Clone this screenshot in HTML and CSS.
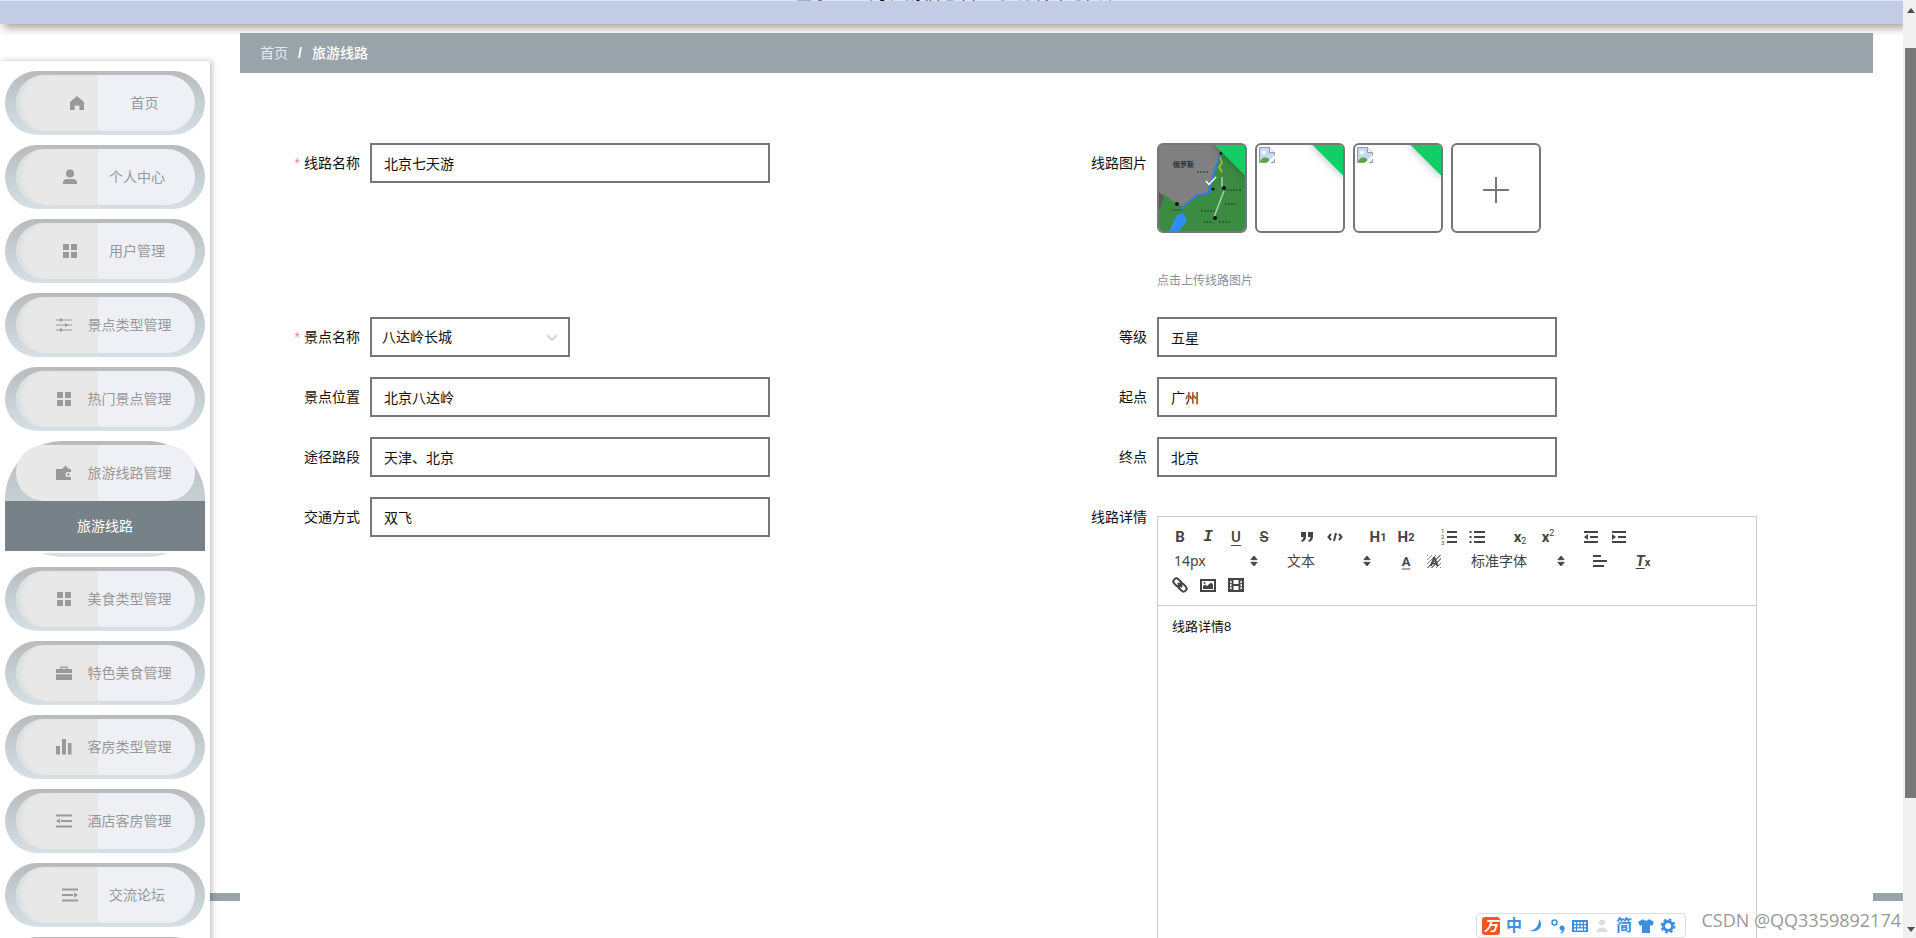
FILE: index.html
```html
<!DOCTYPE html>
<html lang="zh-CN">
<head>
<meta charset="utf-8">
<title>旅游线路</title>
<link rel="stylesheet" href="styles.css">
</head>
<body>
<svg class="defs" aria-hidden="true">
  <symbol id="i-home" viewBox="0 0 16 16"><path d="M8 1 1 7v8h4.600v-4.500h4.800V15H15V7z"/></symbol>
  <symbol id="i-user" viewBox="0 0 16 16"><circle cx="8" cy="4.500" r="4"/><path d="M1 15v-1.500C1 11 3 10 5 10h6c2 0 4 1 4 3.500V15z"/></symbol>
  <symbol id="i-grid" viewBox="0 0 16 16"><path d="M1 1h6v6H1zM9 1h6v6H9zM1 9h6v6H1zM9 9h6v6H9z"/></symbol>
  <symbol id="i-oper" viewBox="0 0 16 16"><path d="M0 2.500h4V1l3 1.500h9v1H7L4 5V3.500H0zM0 7.500h9V6l3 1.500h4v1h-4L9 10V8.500H0zM0 12.500h4V11l3 1.500h9v1H7L4 15v-1.500H0z"/></symbol>
  <symbol id="i-wallet" viewBox="0 0 16 16"><path d="M0 4h6l3.500-3.500L13 4h2v3h-3a2.500 2.500 0 0 0 0 5h3v3H0z"/><circle cx="12.500" cy="9.500" r="1.200"/></symbol>
  <symbol id="i-case" viewBox="0 0 16 16"><path d="M4.500 4V1.500h7V4H16v4H0V4zM6 4h4V2.800H6zM0 9.200h16V15H0z"/></symbol>
  <symbol id="i-bars" viewBox="0 0 16 16"><path d="M0 7h4v8.500H0zM6 0h4v15.500H6zM12 4h3.500v11.500H12z"/></symbol>
  <symbol id="i-fold" viewBox="0 0 16 16"><path d="M0 1.500h16v2H0zM5 7h11v2H5zM0 12.500h16v2H0zM0 8l4-2.500v5z"/></symbol>
  <symbol id="i-unfold" viewBox="0 0 16 16"><path d="M0 1.500h16v2H0zM0 7h11v2H0zM0 12.500h16v2H0zM16 8l-4-2.500v5z"/></symbol>
  <symbol id="i-sort" viewBox="0 0 18 18"><path d="M5.500 7.500 9 3.500l3.500 4zM5.500 10.500 9 14.500l3.500-4z" stroke="currentColor" stroke-width="1" stroke-linejoin="round"/></symbol>
  <symbol id="i-broken" viewBox="0 0 16 16"><path d="M.5.500h10l5 5v10H.5z" fill="#c5d8f5" stroke="#9a9a9a"/><path d="M10.500.500v5h5" fill="#fff" stroke="#9a9a9a"/><circle cx="5" cy="5.500" r="2" fill="#fff"/><path d="M1 15c1-4 4-5.500 8-4l3 4z" fill="#5aa63c"/><path d="m7.500 16 8.500-8v3.500L11.500 16z" fill="#fff"/></symbol>
</svg>

<div class="page">
  <header class="topbar"><h1 class="title">基于Java的旅游信息管理系统设计与实现</h1></header>
  <div class="layout">
    <aside class="sidebar">
      <ul class="menu">
        <li class="item"><a href="#" class="pill short"><svg class="mi"><use href="#i-home"/></svg>首页</a></li>
        <li class="item"><a href="#" class="pill medium"><svg class="mi"><use href="#i-user"/></svg>个人中心</a></li>
        <li class="item"><a href="#" class="pill medium"><svg class="mi"><use href="#i-grid"/></svg>用户管理</a></li>
        <li class="item"><a href="#" class="pill"><svg class="mi"><use href="#i-oper"/></svg>景点类型管理</a></li>
        <li class="item"><a href="#" class="pill"><svg class="mi"><use href="#i-grid"/></svg>热门景点管理</a></li>
        <li class="item open"><a href="#" class="pill"><svg class="mi"><use href="#i-wallet"/></svg>旅游线路管理</a><a href="#" class="sub">旅游线路</a></li>
        <li class="item"><a href="#" class="pill"><svg class="mi"><use href="#i-grid"/></svg>美食类型管理</a></li>
        <li class="item"><a href="#" class="pill"><svg class="mi"><use href="#i-case"/></svg>特色美食管理</a></li>
        <li class="item"><a href="#" class="pill"><svg class="mi"><use href="#i-bars"/></svg>客房类型管理</a></li>
        <li class="item"><a href="#" class="pill"><svg class="mi"><use href="#i-fold"/></svg>酒店客房管理</a></li>
        <li class="item"><a href="#" class="pill medium"><svg class="mi"><use href="#i-unfold"/></svg>交流论坛</a></li>
        <li class="item"><a href="#" class="pill medium"><svg class="mi"><use href="#i-grid"/></svg></a></li>
      </ul>
    </aside>
    <main class="main">
      <div class="content">
        <nav class="crumbs"><a href="#">首页</a><span class="sep">/</span><span class="here">旅游线路</span></nav>
        <form class="form">
          <div class="field"><label for="name" class="label"><span class="req">*</span>线路名称</label><input id="name" class="input" value="北京七天游"></div>
          <div class="field">
            <span class="label">线路图片</span>
            <div class="upload">
              <div class="thumbs">
                <div class="thumb">
                  <svg class="map" viewBox="0 0 86 86" preserveAspectRatio="none">
                    <rect width="86" height="86" fill="#3b8c42"/>
                    <path d="M0 0h64L60 12 54 34 48 48 38 50 24 62 14 56 6 50 0 48z" fill="#808080"/>
                    <path d="M0 47 5 52 0 66z" fill="#5a5560"/>
                    <path d="M62 7 55 28 50 44 52 46 48 49 38 50 22 64" fill="none" stroke="#2b7de0" stroke-width="2"/>
                    <path d="M18 70 24 68 28 76 20 86 10 86z" fill="#2f8df5"/>
                    <path d="M61 12 63 18 60 22 63 27" fill="none" stroke="#b8c020" stroke-width="1.500"/>
                    <path d="M63 32v10M65 46 55 72" fill="none" stroke="#a9cfae" stroke-width="1.500"/>
                    <g fill="#111"><circle cx="18" cy="59" r="2"/><circle cx="65" cy="43" r="2"/><circle cx="56" cy="73" r="2"/><circle cx="54" cy="44" r="1.500"/><circle cx="62" cy="8" r="1.500"/></g>
                    <text class="mt" x="14" y="22">俄罗斯</text>
                    <path d="M38 27h12M68 45h15M66 59h12M42 66h14M44 77h10M60 77h12M13 65h10" stroke="#1f4f2b" stroke-width="2" stroke-dasharray="2 1" opacity=".6"/>
                  </svg>
                  <span class="badge"></span>
                  <svg class="tick" viewBox="0 0 12 12"><path d="m1 6 3 3.500L11 2" fill="none" stroke="#fff" stroke-width="1.500"/></svg>
                </div>
                <div class="thumb"><svg class="broken"><use href="#i-broken"/></svg><span class="badge"></span></div>
                <div class="thumb"><svg class="broken"><use href="#i-broken"/></svg><span class="badge"></span></div>
                <button type="button" class="thumb add" aria-label="上传"><svg class="plus" viewBox="0 0 26 26"><path d="M13 0v26M0 13h26" stroke="#777" stroke-width="2"/></svg></button>
              </div>
              <p class="tip">点击上传线路图片</p>
            </div>
          </div>
          <div class="field"><label for="spot" class="label"><span class="req">*</span>景点名称</label><span class="pick"><select id="spot" class="input select"><option>八达岭长城</option></select><svg class="chev" viewBox="0 0 12 12"><path d="m1 3 5 5 5-5" fill="none" stroke="#c8c8cc" stroke-width="1.500"/></svg></span></div>
          <div class="field"><label for="level" class="label">等级</label><input id="level" class="input" value="五星"></div>
          <div class="field"><label for="place" class="label">景点位置</label><input id="place" class="input" value="北京八达岭"></div>
          <div class="field"><label for="from" class="label">起点</label><input id="from" class="input" value="广州"></div>
          <div class="field"><label for="via" class="label">途径路段</label><input id="via" class="input" value="天津、北京"></div>
          <div class="field"><label for="to" class="label">终点</label><input id="to" class="input" value="北京"></div>
          <div class="field"><label for="traffic" class="label">交通方式</label><input id="traffic" class="input" value="双飞"></div>
          <div class="field">
            <span class="label">线路详情</span>
            <div class="editor">
              <div class="toolbar">
                <span class="group">
                  <button type="button" class="tb b">B</button>
                  <button type="button" class="tb i">I</button>
                  <button type="button" class="tb u">U</button>
                  <button type="button" class="tb s">S</button>
                </span>
                <span class="group">
                  <button type="button" class="tb" aria-label="引用"><svg viewBox="0 0 18 18"><path class="f" d="M3 4h5v4.500C8 11.500 6.500 13 4 14l-.8-1.500C4.500 12 5.300 11 5.500 9H3zM10 4h5v4.500c0 3-1.500 4.500-4 5.500l-.8-1.500c1.300-.5 2.100-1.500 2.300-3.500H10z"/></svg></button>
                  <button type="button" class="tb" aria-label="代码"><svg viewBox="0 0 18 18"><path d="M5 6 2.500 9 5 12M13 6l2.500 3-2.500 3M10 5 8 13"/></svg></button>
                </span>
                <span class="group">
                  <button type="button" class="tb h">H<small>1</small></button>
                  <button type="button" class="tb h">H<small>2</small></button>
                </span>
                <span class="group">
                  <button type="button" class="tb" aria-label="有序列表"><svg viewBox="0 0 18 18"><path d="M7 4h10M7 9h10M7 14h10"/><text class="n" x="1" y="5">1</text><text class="n" x="1" y="11">2</text><text class="n" x="1" y="17">3</text></svg></button>
                  <button type="button" class="tb" aria-label="无序列表"><svg viewBox="0 0 18 18"><path d="M6 4h11M6 9h11M6 14h11M1.500 4h2M1.500 9h2M1.500 14h2"/></svg></button>
                </span>
                <span class="group">
                  <button type="button" class="tb x">x<sub>2</sub></button>
                  <button type="button" class="tb x">x<sup>2</sup></button>
                </span>
                <span class="group">
                  <button type="button" class="tb" aria-label="减少缩进"><svg viewBox="0 0 18 18"><path d="M2 4h14M8 9h8M2 14h14"/><path class="f" d="M6 6v6L2 9z"/></svg></button>
                  <button type="button" class="tb" aria-label="增加缩进"><svg viewBox="0 0 18 18"><path d="M2 4h14M8 9h8M2 14h14"/><path class="f" d="M2 6v6L6 9z"/></svg></button>
                </span>
                <span class="group picker"><select class="ps" aria-label="字号"><option>14px</option></select><svg class="sort"><use href="#i-sort"/></svg></span>
                <span class="group picker"><select class="ps" aria-label="标题"><option>文本</option></select><svg class="sort"><use href="#i-sort"/></svg></span>
                <span class="group">
                  <button type="button" class="tb c">A</button>
                  <button type="button" class="tb c"><span class="hatch">A</span></button>
                </span>
                <span class="group picker wide"><select class="ps" aria-label="字体"><option>标准字体</option></select><svg class="sort"><use href="#i-sort"/></svg></span>
                <span class="group"><button type="button" class="tb" aria-label="对齐"><svg viewBox="0 0 18 18"><path d="M2 4h8M2 9h14M2 14h11"/></svg></button></span>
                <span class="group"><button type="button" class="tb t"><i>T</i><small>x</small></button></span>
                <span class="group">
                  <button type="button" class="tb" aria-label="链接"><svg viewBox="0 0 18 18"><g transform="rotate(45 9 9)"><rect x="1" y="6" width="9" height="6" rx="3"/><rect x="8" y="6" width="9" height="6" rx="3"/><path d="M6 9h6"/></g></svg></button>
                  <button type="button" class="tb" aria-label="图片"><svg viewBox="0 0 18 18"><path d="M2 4h14v11H2z"/><path class="f" d="M4 13V10l2-1.500L8 10l4-3.500 2 2V13z"/><circle class="f" cx="5.500" cy="7" r="1"/></svg></button>
                  <button type="button" class="tb" aria-label="视频"><svg viewBox="0 0 18 18"><path d="M2 3h14v12H2zM5.500 3v12M12.500 3v12M5.500 9h7"/><path d="M3.500 4v10M14.500 4v10" stroke-dasharray="1 2"/></svg></button>
                </span>
              </div>
              <div class="area" contenteditable="true" aria-label="线路详情">线路详情8</div>
            </div>
          </div>
        </form>
      </div>
    </main>
  </div>
</div>

<div class="scroll" aria-hidden="true">
  <span class="up"></span><span class="bar"></span><span class="down"></span>
</div>

<div class="ime">
  <span class="logo">万</span>
  <span class="zh">中</span>
  <svg class="ii" viewBox="0 0 16 16"><path d="M11 1c5 6 1 14-10 12C8 12 11 8 11 1z"/></svg>
  <svg class="ii" viewBox="0 0 16 16"><circle cx="4.500" cy="4.500" r="2.500" fill="none" stroke="#3d8fdd" stroke-width="1.500"/><circle cx="12" cy="10" r="2.500"/><path d="M14.500 10c0 3-1 4.500-3.500 5.500l-.5-1c1.500-.8 2-1.500 2-3z"/></svg>
  <svg class="ii" viewBox="0 0 16 16"><path fill-rule="evenodd" d="M0 2h16v12H0zM2 4v2h2V4zM5.300 4v2h2V4zM8.600 4v2h2V4zM12 4v2h2V4zM2 7.200v2h2v-2zM5.300 7.200v2h2v-2zM8.600 7.200v2h2v-2zM12 7.200v2h2v-2zM2 10.500v2h2v-2zM5 10.500v2h6v-2zM12 10.500v2h2v-2z"/></svg>
  <svg class="ii pale" viewBox="0 0 16 16"><circle cx="8" cy="4.500" r="3"/><path d="M2.500 14c0-6 11-6 11 0z"/></svg>
  <span class="zh">简</span>
  <svg class="ii" viewBox="0 0 16 16"><path d="M5 1c1 2 5 2 6 0l5 3-2 4-2-1v8H4V7L2 8 0 4z"/></svg>
  <svg class="ii" viewBox="0 0 16 16"><circle cx="8" cy="8" r="4.500" fill="none" stroke="#3d8fdd" stroke-width="3"/><circle cx="8" cy="8" r="6.500" fill="none" stroke="#3d8fdd" stroke-width="2" stroke-dasharray="2.600 2.500"/></svg>
</div>
<div class="mark">CSDN @QQ3359892174</div>
</body>
</html>
```

FILE: styles.css
```css
* { box-sizing: border-box; }

body {
  margin: 0;
  height: 100vh;
  overflow: hidden;
  display: grid;
  grid-template-columns: minmax(0, 1fr) 13px;
  background: #fff;
  color: #111;
  font: 14px/20px "Liberation Sans", "Noto Sans CJK SC", sans-serif;
}

a { color: inherit; text-decoration: none; }
button, input, select { font: inherit; color: inherit; }
.defs { position: absolute; width: 0; height: 0; }

.page { height: 100vh; overflow: hidden; }

.topbar {
  position: relative;
  height: 24px;
  display: flex;
  align-items: flex-start;
  justify-content: center;
  background: #c2cce6;
  border-top: 1px solid #dbe5fa;
  box-shadow: 4px 4px 8px rgba(110, 100, 90, .6);
}
.title {
  margin: -19px 0 0;
  padding-left: 13px;
  font-size: 18px;
  line-height: 22px;
  font-weight: 400;
  color: #111;
}

.layout { display: flex; align-items: flex-start; }

.sidebar {
  flex: none;
  width: 210px;
  margin-top: 37px;
  padding: 10px 5px;
  background: #fff;
  box-shadow: 2px 0 6px rgba(0, 0, 0, .25);
  position: relative;
  z-index: 1;
}
.menu { list-style: none; margin: 0; padding: 0; display: grid; gap: 10px; }
.item {
  padding: 4px 10px 4px 11px;
  border-radius: 32px;
  background: linear-gradient(#b9babc, #c3cbce 40%, #ccd7dc 75%, #d8e0e4);
}
.pill {
  display: flex;
  align-items: center;
  justify-content: center;
  gap: 16px;
  height: 56px;
  padding-left: 16px;
  border-radius: 28px;
  background: linear-gradient(90deg, #e8e8e8 82px, #eef0f6 82px);
  box-shadow: inset 7px 0 5px -3px #d9dcdd;
  color: #999;
}
.pill.medium { gap: 31px; }
.pill.short { gap: 46px; }
.mi { width: 16px; height: 16px; fill: #999; }
.item.open { padding: 4px 0 6px; border-radius: 60px; }
.open .pill { margin: 0 10px 0 11px; box-shadow: none; }
.sub {
  display: block;
  line-height: 50px;
  text-align: center;
  color: #fff;
  background: #768287;
  box-shadow: 0 2px 0 #fff;
}

.main { flex: 1; min-width: 0; position: relative; padding: 9px 30px 0; }
.main::before {
  content: "";
  position: absolute;
  left: 0;
  right: 0;
  top: 869px;
  height: 8px;
  background: #98a4a9;
}
.content { position: relative; background: #fff; }
.crumbs {
  display: flex;
  align-items: center;
  gap: 10px;
  height: 40px;
  padding: 0 20px;
  background: #98a4a9;
  color: #e6ebf0;
}
.sep { font-weight: 700; color: #fff; }
.here { color: #fff; font-weight: 500; }

.form {
  display: grid;
  grid-template-columns: 1fr 1fr;
  gap: 20px 0;
  padding: 70px 29px 0 30px;
}
.field { display: flex; align-items: flex-start; }
.label {
  flex: none;
  width: 100px;
  padding-right: 10px;
  line-height: 40px;
  text-align: right;
}
.req { margin-right: 4px; color: #f08a8a; }
.input {
  width: 400px;
  height: 40px;
  padding: 0 12px;
  border: 2px solid #777;
  border-radius: 0;
  background: #fff;
  outline: 0;
}
.pick { position: relative; }
.select { width: 200px; padding: 0 10px; appearance: none; }
.chev { position: absolute; right: 12px; top: 15px; width: 12px; height: 12px; }

.upload { height: 154px; }
.thumbs { display: flex; gap: 8px; }
.thumb {
  position: relative;
  width: 90px;
  height: 90px;
  padding: 0;
  border: 2px solid #777;
  border-radius: 6px;
  background: #fff;
  overflow: hidden;
}
.map { display: block; width: 100%; height: 100%; }
.mt { font-size: 7px; font-weight: 700; fill: #333; }
.broken { display: block; width: 16px; height: 16px; margin: 2px; }
.badge {
  position: absolute;
  right: -17px;
  top: -7px;
  width: 46px;
  height: 26px;
  background: #13ce66;
  transform: rotate(45deg);
  box-shadow: 0 1px 8px rgba(0, 0, 0, .25);
}
.tick { position: absolute; left: 46px; top: 30px; width: 12px; height: 12px; }
.add { display: grid; place-items: center; padding-top: 4px; }
.plus { width: 26px; height: 26px; }
.tip { margin: 38px 0 0; font-size: 12px; line-height: 20px; color: #8a8f9c; }

.editor { flex: none; width: 600px; margin-top: 19px; border: 1px solid #ccc; }
.toolbar {
  display: flex;
  flex-wrap: wrap;
  padding: 8px;
  border-bottom: 1px solid #ccc;
  color: #444;
}
.group { display: flex; height: 24px; margin-right: 15px; }
.tb {
  width: 28px;
  height: 24px;
  padding: 0;
  border: 0;
  background: none;
  display: flex;
  align-items: center;
  justify-content: center;
  font: 700 15px/18px Roboto, sans-serif;
  color: #444;
}
.tb svg { width: 18px; height: 18px; fill: none; stroke: #444; stroke-width: 2; }
.tb svg .f { fill: #444; stroke: none; }
.tb svg .n { font: 6px Roboto, sans-serif; fill: #444; stroke: none; }
.i { font: italic 700 16px/24px "Liberation Mono", monospace; }
.u { font-weight: 500; text-decoration: underline; text-underline-offset: 3px; }
.s { font-weight: 500; text-decoration: line-through; }
.h small { font-size: 11px; line-height: 18px; padding-top: 2px; }
.x sub { font: 9px/9px Roboto, sans-serif; padding-top: 8px; }
.x sup { font: 9px/9px Roboto, sans-serif; padding-bottom: 8px; }
.c { font-size: 13px; line-height: 13px; }
.c:first-child { text-decoration: underline 2px #aaa; text-underline-offset: 2px; }
.hatch {
  width: 14px;
  background: repeating-linear-gradient(135deg, #888 0 1px, #fff 1px 3px);
}
.t i { text-decoration: underline; text-underline-offset: 2px; }
.t small { font-size: 11px; line-height: 18px; padding-top: 4px; }
.picker { position: relative; width: 98px; }
.picker.wide { width: 108px; }
.ps {
  width: 100%;
  padding: 0 8px;
  border: 0;
  background: none;
  appearance: none;
  font-family: "Noto Sans", "Noto Sans CJK SC", sans-serif;
}
.sort { position: absolute; right: 2px; top: 4px; width: 16px; height: 16px; fill: #444; color: #444; }
.area { min-height: 400px; padding: 12px 14px; font-size: 13px; line-height: 18px; outline: 0; }

.scroll {
  display: flex;
  flex-direction: column;
  align-items: center;
  gap: 6px;
  padding: 6px 0 6px 2px;
  background: #f1f1f1;
}
.up, .down { border: 4px solid transparent; }
.up { border-top: 0; border-bottom: 5px solid #505050; margin: 2px 0 29px; }
.bar { flex: 1; align-self: stretch; margin-bottom: 123px; background: #787878; }
.down { border-bottom: 0; border-top: 5px solid #505050; }

.ime {
  position: absolute;
  right: 230px;
  bottom: 0;
  display: flex;
  align-items: center;
  gap: 6px;
  width: 210px;
  height: 25px;
  padding: 0 5px;
  border: 1px solid #ddd;
  border-radius: 4px;
  background: #fff;
  color: #3d8fdd;
}
.logo {
  width: 18px;
  border-radius: 3px;
  background: #f0561d;
  color: #fff;
  font-style: italic;
  font-weight: 700;
  line-height: 18px;
  text-align: center;
}
.zh { font-size: 16px; font-weight: 700; }
.ii { width: 16px; height: 16px; fill: #3d8fdd; }
.pale { fill: #ddd; }
.mark {
  position: absolute;
  right: 15px;
  bottom: 6px;
  font: 18px/24px "Open Sans", sans-serif;
  color: #999;
  text-shadow: 1px 1px 0 #fff;
}
```
